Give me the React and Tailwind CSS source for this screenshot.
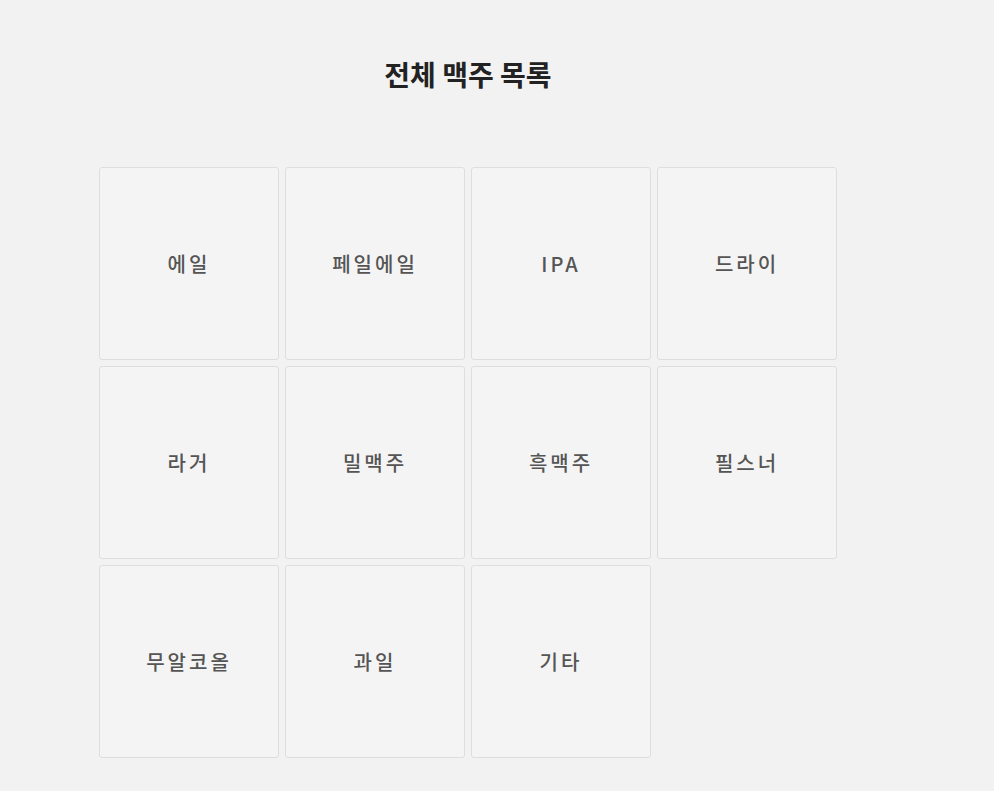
import React from 'react';

const beers = ['에일', '페일에일', 'IPA', '드라이', '라거', '밀맥주', '흑맥주', '필스너', '무알코올', '과일', '기타'];

export default function App() {
  return (
    <div className="min-h-[791px] bg-[#f2f2f2] font-['Noto_Sans_CJK_KR',sans-serif]">
      <div className="ml-[99px] w-[738px] pt-[52px]">
        <h1 className="text-center text-[28px] font-bold text-[#222] leading-[44px]">전체 맥주 목록</h1>

        <div className="mt-[71px] grid grid-cols-4 gap-x-[6px] gap-y-[6px]">
          {beers.map((name) => (
            <div
              key={name}
              className="h-[193px] flex items-center justify-center bg-[#f4f4f4] border border-[#dedede] rounded-[3px]"
            >
              <span className="text-[20px] font-medium tracking-[3px] text-[#555]">{name}</span>
            </div>
          ))}
        </div>
      </div>
    </div>
  );
}
